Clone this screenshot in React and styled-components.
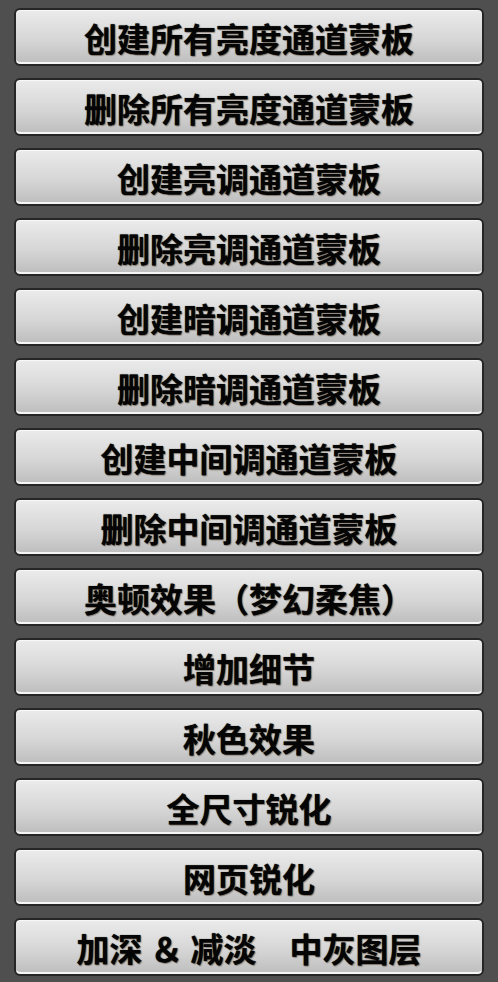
import React from "react";
import styled, { createGlobalStyle } from "styled-components";

const GlobalStyle = createGlobalStyle`
  html, body {
    margin: 0;
    padding: 0;
    background: #4f4f4f;
    overflow: hidden;
  }
`;

const actions = [
  "创建所有亮度通道蒙板",
  "删除所有亮度通道蒙板",
  "创建亮调通道蒙板",
  "删除亮调通道蒙板",
  "创建暗调通道蒙板",
  "删除暗调通道蒙板",
  "创建中间调通道蒙板",
  "删除中间调通道蒙板",
  "奥顿效果（梦幻柔焦）",
  "增加细节",
  "秋色效果",
  "全尺寸锐化",
  "网页锐化",
  "加深 ＆ 减淡　中灰图层",
];

function App() {
  return (
    <>
      <GlobalStyle />
      <Panel>
        {actions.map((label, i) => (
          <ActionButton key={i}>{label}</ActionButton>
        ))}
      </Panel>
    </>
  );
}

const Panel = styled.div`
  width: 498px;
  height: 982px;
  box-sizing: border-box;
  padding: 8px 14px 0 14px;
  display: flex;
  flex-direction: column;
  gap: 12px;
  background: #4f4f4f;
`;

const ActionButton = styled.button`
  height: 58px;
  flex: none;
  box-sizing: border-box;
  border: 2px solid #262626;
  border-radius: 6px;
  background: linear-gradient(180deg, #ebebeb 0%, #d6d6d6 55%, #bdbdbd 100%);
  box-shadow: inset 0 -3px 0 -1px #f5f5f5, inset 0 1px 0 #f8f8f8;
  padding: 3px 0 0 0;
  display: flex;
  align-items: center;
  justify-content: center;
  font-family: "Noto Sans CJK SC", "Noto Sans", sans-serif;
  font-weight: 700;
  font-size: 33px;
  line-height: 1;
  color: #050505;
  text-shadow: 0 0 1px rgba(0, 0, 0, 0.8), 1px 1px 1px rgba(70, 45, 20, 0.45);
  white-space: pre;
  cursor: pointer;
`;

export default App;
